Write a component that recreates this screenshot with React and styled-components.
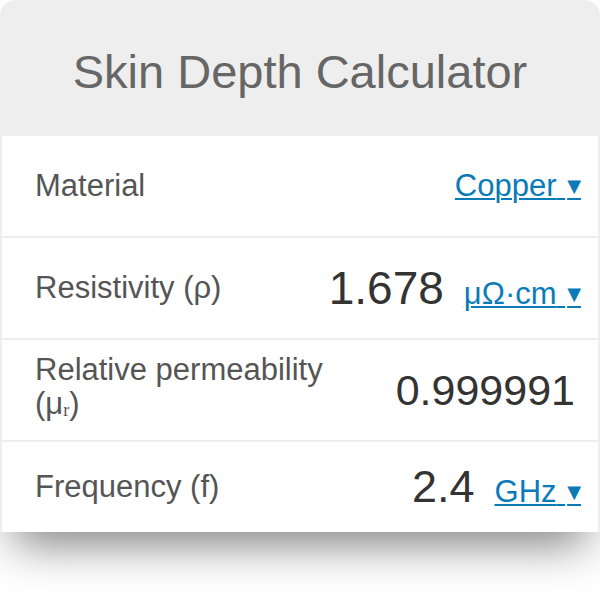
import React from 'react';
import styled, { createGlobalStyle } from 'styled-components';

const GlobalStyle = createGlobalStyle`
  html, body {
    margin: 0;
    padding: 0;
    background: #fff;
  }
  body {
    font-family: "Liberation Sans", Arial, sans-serif;
    height: 600px;
  }
`;

const Card = styled.div`
  position: relative;
  width: 600px;
  box-sizing: border-box;
  background: #eeeeee;
  border-radius: 16px 16px 0 0;
  padding: 0 2px;
  box-shadow: 0 26px 46px -14px rgba(0, 0, 0, 0.5);
`;

const Header = styled.h1`
  margin: 0;
  height: 136px;
  display: flex;
  align-items: center;
  justify-content: center;
  padding-top: 6px;
  box-sizing: border-box;
  font-size: 47px;
  font-weight: normal;
  color: #666;
`;

const Rows = styled.div`
  display: flex;
  flex-direction: column;
  gap: 2px;
`;

const Row = styled.div`
  height: ${p => p.h || 100}px;
  background: #fff;
  display: flex;
  align-items: center;
  justify-content: space-between;
  padding: 0 ${p => p.pr || 17}px 0 33px;
  box-sizing: border-box;
`;

const Label = styled.div`
  font-size: 31px;
  line-height: 34px;
  color: #555;

  sub {
    font-family: "Liberation Serif", serif;
    font-size: 18px;
    vertical-align: -2px;
  }
`;

const Right = styled.div`
  display: flex;
  align-items: baseline;
  gap: 20px;
`;

const Value = styled.span`
  font-size: ${p => p.size || 43}px;
  color: #333;
`;

const Unit = styled.a`
  font-size: 31px;
  color: #0b7bb7;
  text-decoration: underline;
  text-decoration-thickness: 2px;
  text-underline-offset: 2px;
  cursor: pointer;
`;

const Caret = styled.span`
  font-family: "DejaVu Sans", sans-serif;
  font-size: 18px;
  margin-left: 2px;
  vertical-align: 4px;
`;

function Select({ children }) {
  return (
    <Unit>
      {children} <Caret>▼</Caret>
    </Unit>
  );
}

export default function App() {
  return (
    <>
      <GlobalStyle />
      <Card>
        <Header>Skin Depth Calculator</Header>
        <Rows>
          <Row>
            <Label>Material</Label>
            <Select>Copper</Select>
          </Row>
          <Row>
            <Label>Resistivity (ρ)</Label>
            <Right>
              <Value size={46}>1.678</Value>
              <Select>μΩ·cm</Select>
            </Right>
          </Row>
          <Row pr={23}>
            <Label>
              Relative permeability
              <br />
              (μ<sub>r</sub>)
            </Label>
            <Value>0.999991</Value>
          </Row>
          <Row h={90}>
            <Label>Frequency (f)</Label>
            <Right>
              <Value size={45}>2.4</Value>
              <Select>GHz</Select>
            </Right>
          </Row>
        </Rows>
      </Card>
    </>
  );
}
